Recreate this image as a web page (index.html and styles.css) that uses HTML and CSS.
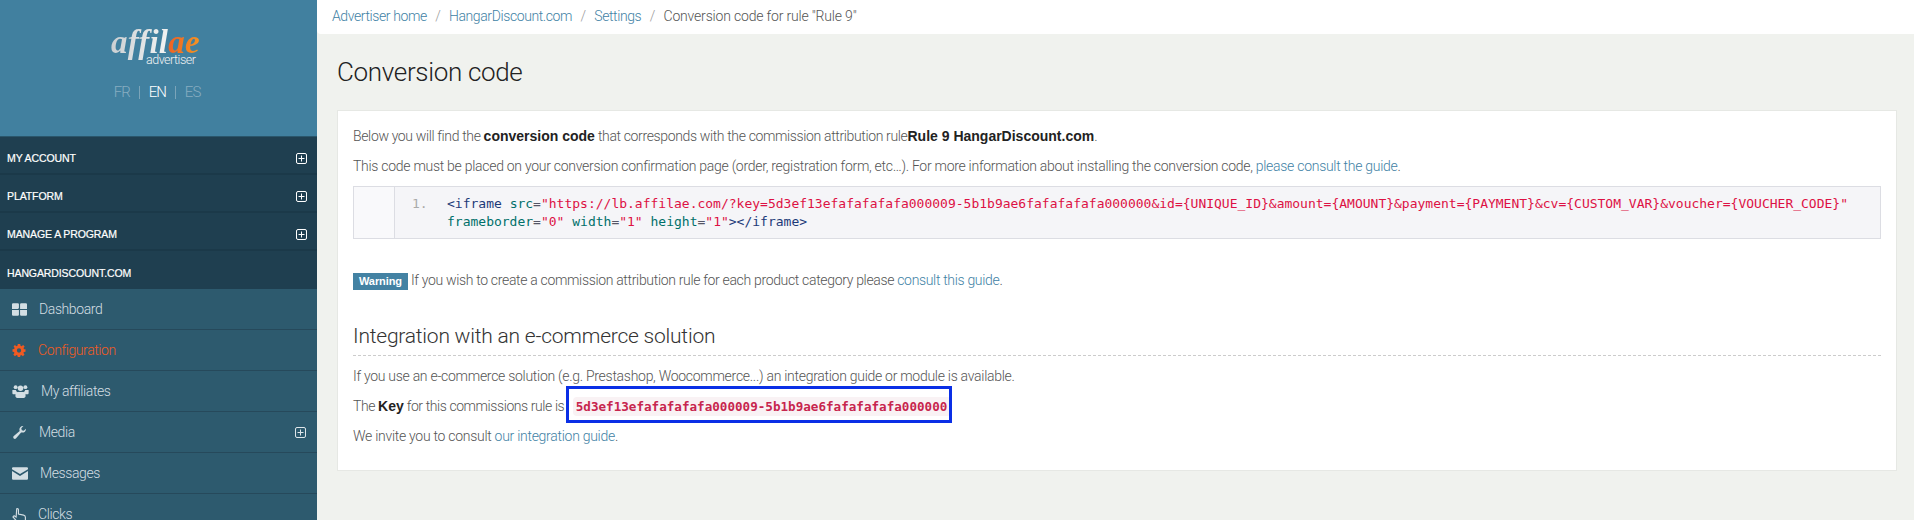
FILE: index.html
```html
<!DOCTYPE html>
<html lang="en">
<head>
<meta charset="utf-8">
<title>Conversion code</title>
<link rel="stylesheet" href="styles.css">
</head>
<body>
<div class="app">
  <aside class="sidebar">
    <div class="brand">
      <div class="logo"><span class="logo-word"><span class="logo-af">affil</span><span class="logo-ae">ae</span></span><span class="logo-sub">advertiser</span></div>
      <div class="langs"><a>FR</a><i></i><a class="on">EN</a><i></i><a>ES</a></div>
    </div>
    <div class="section">MY ACCOUNT<svg class="plus" viewBox="0 0 11 11"><use href="#plus"/></svg></div>
    <div class="section">PLATFORM<svg class="plus" viewBox="0 0 11 11"><use href="#plus"/></svg></div>
    <div class="section">MANAGE A PROGRAM<svg class="plus" viewBox="0 0 11 11"><use href="#plus"/></svg></div>
    <div class="section">HANGARDISCOUNT.COM</div>
    <nav>
      <a class="item"><svg class="ic w15" viewBox="0 0 13 11"><path d="M0 1a1 1 0 0 1 1-1h4a1 1 0 0 1 1 1v3a1 1 0 0 1-1 1H0zM7 1a1 1 0 0 1 1-1h4a1 1 0 0 1 1 1v4H7zM0 6h6v4a1 1 0 0 1-1 1H1a1 1 0 0 1-1-1zM7 6h6v4a1 1 0 0 1-1 1H8a1 1 0 0 1-1-1z"/></svg>Dashboard</a>
      <a class="item active"><svg class="ic w14" viewBox="0 0 12 12"><path d="M4.900 0h2.200l.3 1.600 1 .4L9.800 1l1.400 1.400-1 1.400.4 1 1.400.1v2.200l-1.500.3-.4 1 1 1.400-1.500 1.400-1.400-1-1 .4-.2 1.600H4.900l-.3-1.600-1-.4-1.400 1-1.400-1.500 1-1.300-.4-1L0 7.100V4.900l1.500-.2.500-1-1-1.300L2.200 1l1.400 1 1-.4zM6 4a2 2 0 1 0 0 4 2 2 0 0 0 0-4z" fill-rule="evenodd"/></svg>Configuration</a>
      <a class="item"><svg class="ic w17" viewBox="0 0 15 12"><circle cx="3" cy="2" r="1.800"/><circle cx="12" cy="2" r="1.800"/><circle cx="7.500" cy="3" r="2.500"/><path d="M0 4.500h3.200c.2 1 .7 1.600 1.300 2-.8.400-1.300 1-1.600 2H1C.4 8.500 0 8 0 7.300zM15 4.500h-3.200c-.2 1-.7 1.600-1.300 2 .8.400 1.300 1 1.600 2H14c.6 0 1-.5 1-1.200zM5 6.500h5c1.500 0 2.200 1.500 2.200 3.500 0 1.300-.7 2-1.700 2h-6c-1 0-1.700-.7-1.700-2 0-2 .7-3.500 2.200-3.500z"/></svg>My affiliates</a>
      <a class="item"><svg class="ic w15" viewBox="0 0 13 13"><path d="M12.900 2.700c.3 2-1.300 3.900-3.500 3.900-.5 0-.9-.1-1.300-.2l-5 5.900c-.7.800-1.700.8-2.300.2-.7-.6-.8-1.700 0-2.400l5.900-5A3.600 3.600 0 0 1 10.400.1L8.300 2.200l.5 2 2 .5z"/></svg>Media<svg class="plus item-plus" viewBox="0 0 11 11"><use href="#plus"/></svg></a>
      <a class="item"><svg class="ic w16" viewBox="0 0 14 11"><path d="M0 1a1 1 0 0 1 1-1h12a1 1 0 0 1 1 1v.7L7 6 0 1.700zM0 3.400 7 7.700l7-4.300V10a1 1 0 0 1-1 1H1a1 1 0 0 1-1-1z"/></svg>Messages</a>
      <a class="item"><svg class="ic hand" viewBox="0 0 12 14"><path d="M4 .7a1 1 0 0 1 1.500.8v3.800l4.500.9c1 .2 1.600.9 1.600 1.900v3.400H4L.7 7.800l1-1.100 1.800 1.200z" fill="none" stroke="currentColor" stroke-width="1"/><rect x="3.600" y="11.800" width="8" height="2.200"/></svg>Clicks</a>
    </nav>
  </aside>
  <main class="main">
    <div class="crumbs"><a>Advertiser home</a><i>/</i><a>HangarDiscount.com</a><i>/</i><a>Settings</a><i>/</i><span>Conversion code for rule "Rule 9"</span></div>
    <div class="content">
      <h1>Conversion code</h1>
      <section class="card">
        <p class="lead">Below you will find the <b>conversion code</b> that corresponds with the commission attribution rule<b>Rule 9 HangarDiscount.com</b>.</p>
        <p>This code must be placed on your conversion confirmation page (order, registration form, etc…). For more information about installing the conversion code, <a>please consult the guide</a>.</p>
        <div class="code"><div class="gutter"></div><div class="num">1.</div><pre><span class="t">&lt;iframe</span> <span class="k">src</span><span class="o">=</span><span class="s">"https://lb.affilae.com/?key=5d3ef13efafafafafa000009-5b1b9ae6fafafafafa000000&amp;id={UNIQUE_ID}&amp;amount={AMOUNT}&amp;payment={PAYMENT}&amp;cv={CUSTOM_VAR}&amp;voucher={VOUCHER_CODE}"</span>
<span class="k">frameborder</span><span class="o">=</span><span class="s">"0"</span> <span class="k">width</span><span class="o">=</span><span class="s">"1"</span> <span class="k">height</span><span class="o">=</span><span class="s">"1"</span><span class="t">&gt;&lt;/iframe&gt;</span></pre></div>
        <p class="warn"><span class="label">Warning</span> If you wish to create a commission attribution rule for each product category please <a>consult this guide</a>.</p>
        <h3>Integration with an e-commerce solution</h3>
        <p>If you use an e-commerce solution (e.g. Prestashop, Woocommerce...) an integration guide or module is available.</p>
        <p class="keyline">The <b>Key</b> for this commissions rule is <code class="key">5d3ef13efafafafafa000009-5b1b9ae6fafafafafa000000</code></p>
        <p>We invite you to consult <a>our integration guide</a>.</p>
      </section>
    </div>
  </main>
</div>
<svg class="defs" aria-hidden="true"><symbol id="plus" viewBox="0 0 11 11"><rect x=".5" y=".5" width="10" height="10" rx="1.500" fill="none" stroke="currentColor"/><path d="M5.500 2.500v6M2.500 5.500h6" stroke="currentColor" fill="none"/></symbol></svg>
</body>
</html>
```
FILE: styles.css
```css
* { box-sizing: border-box; }
html, body { margin: 0; height: 520px; overflow: hidden; }
body { font: 300 14px/20px Roboto, "Liberation Sans", Arial, sans-serif; color: #555; background: #f0f2ee; }
.defs { width: 0; height: 0; display: block; }
.app { display: flex; height: 520px; }
.sidebar { width: 317px; flex: none; background: #2d5a6e; overflow: hidden; }
.brand { height: 137px; background: #41809f; border-bottom: 1px solid #2a566b; display: flex; flex-direction: column; align-items: center; padding-top: 26px; }
.logo { position: relative; height: 37px; width: 90px; margin-left: -5px; flex: none; }
.logo-word { display: block; font: italic bold 33px/33px "Liberation Serif", serif; white-space: nowrap; letter-spacing: .2px; }
.logo-af { background: linear-gradient(100deg, #c9cdd0, #f4f5f5); -webkit-background-clip: text; background-clip: text; color: transparent; }
.logo-ae { background: linear-gradient(100deg, #ee5a24, #f59a23); -webkit-background-clip: text; background-clip: text; color: transparent; }
.logo-sub { position: absolute; left: 35px; top: 27px; font: 300 12.500px/14px Roboto, sans-serif; letter-spacing: -.5px; color: #f0f2f3; }
.langs { display: flex; align-items: center; margin-top: 19px; margin-left: -3px; font-size: 15px; color: #87adc1; letter-spacing: -1px; }
.langs a.on { color: #fff; }
.langs i { width: 1px; height: 13px; background: #7ba4b9; margin: 0 9px; }
.section { height: 38px; background: #1f3f50; border-bottom: 2px solid #1b3949; display: flex; align-items: center; justify-content: space-between; padding: 6px 10px 0 7px; font: 400 10.500px/14px "Liberation Sans", sans-serif; color: #fff; letter-spacing: -.1px; -webkit-text-stroke: .2px #fff; }
.section:nth-of-type(5) { border-bottom: 0; padding-top: 5px; }
.plus { width: 11px; height: 11px; color: #fff; flex: none; margin-top: 1px; }
.item { height: 41px; display: flex; align-items: center; padding-left: 12px; color: #d3dee3; border-bottom: 1px solid #26495b; font-size: 14px; letter-spacing: -.4px; }
.item.active { color: #f05a22; }
.ic { fill: currentColor; height: 13px; margin-right: 12px; flex: none; }
.w14 { width: 14px; }
.w15 { width: 15px; }
.w16 { width: 16px; }
.w17 { width: 17px; }
.hand { width: 14px; height: 16px; margin-top: 4px; }
.item-plus { margin-left: auto; margin-right: 11px; color: #dfe6ea; }
.main { flex: 1; min-width: 0; }
.crumbs { height: 34px; background: #fff; border-radius: 0 0 0 4px; display: flex; align-items: center; padding: 0 0 2px 15px; letter-spacing: -.4px; }
.crumbs a, .card a { color: #3f82a5; }
.crumbs i { font-style: normal; color: #999; margin: 0 8.500px; }
.crumbs span { color: #555; letter-spacing: -.18px; }
.content { padding: 0 17px 0 20px; }
h1 { margin: 0; height: 76px; font-size: 26px; line-height: 76px; font-weight: 300; color: #222; letter-spacing: -.33px; }
.card { background: #fff; border: 1px solid #e6e8e4; padding: 15px; height: 361px; }
.card p { margin: 0 0 10px; letter-spacing: -.28px; }
.card .lead { letter-spacing: -.36px; }
.card .keyline { letter-spacing: -.42px; }
.card b { color: #222; font: 700 14px/20px "Liberation Sans", sans-serif; letter-spacing: 0; }
.code { position: relative; height: 53px; margin-bottom: 31px; background: #f5f5f8; border: 1px solid #dcdde3; padding-left: 93px; display: flex; }
.gutter { position: absolute; left: 0; top: 0; bottom: 0; width: 41px; background: #f9f9fb; border-right: 1px solid #dcdde3; }
.num { position: absolute; left: 58px; top: 8px; font: 400 13px/18px "DejaVu Sans Mono", monospace; color: #aaa; }
pre { margin: 0; padding-top: 8px; font: 400 13px/18px "DejaVu Sans Mono", monospace; white-space: pre; }
.t { color: #1c3a78; }
.k { color: #00706a; }
.o { color: #556; }
.s { color: #dd1144; }
.card .warn { margin-bottom: 33px; letter-spacing: -.33px; }
.label { display: inline-block; height: 17px; padding: 0 6px; background: #4382a3; color: #fff; font: 700 11px/17px "Liberation Sans", sans-serif; letter-spacing: -.1px; }
h3 { margin: 0 0 10px; height: 33px; line-height: 26px; font-size: 21px; font-weight: 300; color: #333; border-bottom: 1px dashed #ccc; letter-spacing: -.22px; }
.key { position: relative; display: inline-block; margin-left: 5.500px; padding: 0 4px 0 3px; height: 19px; background: #f9f2f4; border-radius: 4px; font: bold 12.600px/19px "DejaVu Sans Mono", monospace; color: #c7254e; letter-spacing: 0; }
.key::after { content: ""; position: absolute; left: -7px; right: -1px; top: -11px; bottom: -7px; border: 3px solid #0a2fe6; }
```
